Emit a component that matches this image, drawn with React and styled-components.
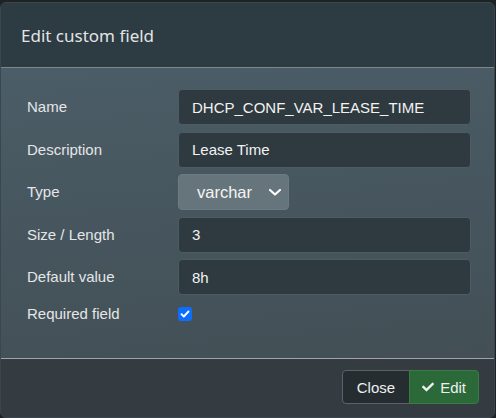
import React from "react"
import styled, { createGlobalStyle } from "styled-components"
import { FaCheck } from "react-icons/fa"

const GlobalStyle = createGlobalStyle`
    html, body {
        margin: 0;
        padding: 0;
        background: #1c2226;
    }
    body {
        font-family: "Liberation Sans", Arial, sans-serif;
    }
`

const Page = styled.div`
    width: 496px;
    height: 418px;
    padding: 2px 1px 2px 0;
    box-sizing: border-box;
`

const Modal = styled.div`
    height: 100%;
    display: flex;
    flex-direction: column;
    border: 1px solid #3b474d;
    border-radius: 6px;
    overflow: hidden;
    background: #343c41;
`

const Header = styled.div`
    height: 64px;
    display: flex;
    align-items: center;
    padding: 0 20px;
    background: #2d3b43;
    border-bottom: 1px solid #7c868b;
`

const Title = styled.h4`
    margin: 0;
    font-family: "Noto Sans", "Open Sans", sans-serif;
    font-weight: 400;
    font-size: 17px;
    color: #e2e4e5;
`

const Body = styled.div`
    flex: 1;
    padding: 21px 23px 0 26px;
    background: linear-gradient(175deg, #4b5d67 0%, #46555d 55%, #434f55 100%);
    display: grid;
    grid-template-columns: 151px 1fr;
    grid-auto-rows: min-content;
    row-gap: 6.5px;
    align-items: center;
`

const Label = styled.label`
    font-size: 15px;
    color: #e4e6e7;
    line-height: ${p => (p.$short ? "24px" : "36px")};
`

const Input = styled.input`
    height: 36px;
    box-sizing: border-box;
    padding: 0 13px;
    border: 1px solid #4d5b62;
    border-radius: 4px;
    background: #2e3a40;
    color: #f2f2f2;
    font-family: inherit;
    font-size: 15px;
    outline: none;
`

const SelectBox = styled.div`
    width: 111px;
    height: 36px;
    box-sizing: border-box;
    padding: 0 6px 0 18px;
    display: flex;
    align-items: center;
    justify-content: space-between;
    border: 1px solid #6e7b81;
    border-radius: 4px;
    background: #66747b;
    color: #f4f4f4;
    font-size: 16.5px;
`

const Check = styled.span`
    width: 14px;
    height: 14px;
    display: flex;
    align-items: center;
    justify-content: center;
    border-radius: 3px;
    background: #0d6efd;
    color: #fff;
`

const CheckRow = styled.div`
    height: 24px;
    display: flex;
    align-items: center;
`

const Footer = styled.div`
    height: 59px;
    box-sizing: border-box;
    display: flex;
    justify-content: flex-end;
    align-items: flex-start;
    padding: 11px 15px 0 0;
    border-top: 1px solid #9ea4a7;
    background: #343c41;
`

const ButtonGroup = styled.div`
    display: flex;
`

const Button = styled.button`
    height: 34px;
    display: flex;
    align-items: center;
    gap: 6px;
    padding: 0 ${p => (p.$primary ? "12px" : "14px")};
    font-family: inherit;
    font-size: 15px;
    color: #eef0f0;
    border: 1px solid ${p => (p.$primary ? "#3a7a47" : "#5a6468")};
    background: ${p => (p.$primary ? "#2b6a38" : "#262d31")};
    border-radius: ${p => (p.$primary ? "0 4px 4px 0" : "4px 0 0 4px")};
    ${p => p.$primary && "margin-left: -1px;"}
`

const fields = [
    { label: "Name", value: "DHCP_CONF_VAR_LEASE_TIME" },
    { label: "Description", value: "Lease Time" },
]

const App = () => {
    return (
        <Page>
            <GlobalStyle />
            <Modal>
                <Header>
                    <Title>Edit custom field</Title>
                </Header>
                <Body>
                    {fields.map(f => (
                        <React.Fragment key={f.label}>
                            <Label>{f.label}</Label>
                            <Input defaultValue={f.value} />
                        </React.Fragment>
                    ))}
                    <Label>Type</Label>
                    <div>
                        <SelectBox>
                            <span>varchar</span>
                            <svg width="14" height="10" viewBox="0 0 14 10">
                                <path d="M2 3l5 4.5 5-4.5" fill="none" stroke="#fff" strokeWidth="2.2" strokeLinecap="round" strokeLinejoin="round" />
                            </svg>
                        </SelectBox>
                    </div>
                    <Label>Size / Length</Label>
                    <Input defaultValue="3" />
                    <Label>Default value</Label>
                    <Input defaultValue="8h" />
                    <Label $short>Required field</Label>
                    <CheckRow>
                        <Check>
                            <svg width="10" height="10" viewBox="0 0 10 10">
                                <path d="M1.5 5.2l2.3 2.3 4.7-5" fill="none" stroke="#fff" strokeWidth="1.9" strokeLinecap="round" strokeLinejoin="round" />
                            </svg>
                        </Check>
                    </CheckRow>
                </Body>
                <Footer>
                    <ButtonGroup>
                        <Button>Close</Button>
                        <Button $primary>
                            <FaCheck size={12} />
                            Edit
                        </Button>
                    </ButtonGroup>
                </Footer>
            </Modal>
        </Page>
    )
}

export default App
